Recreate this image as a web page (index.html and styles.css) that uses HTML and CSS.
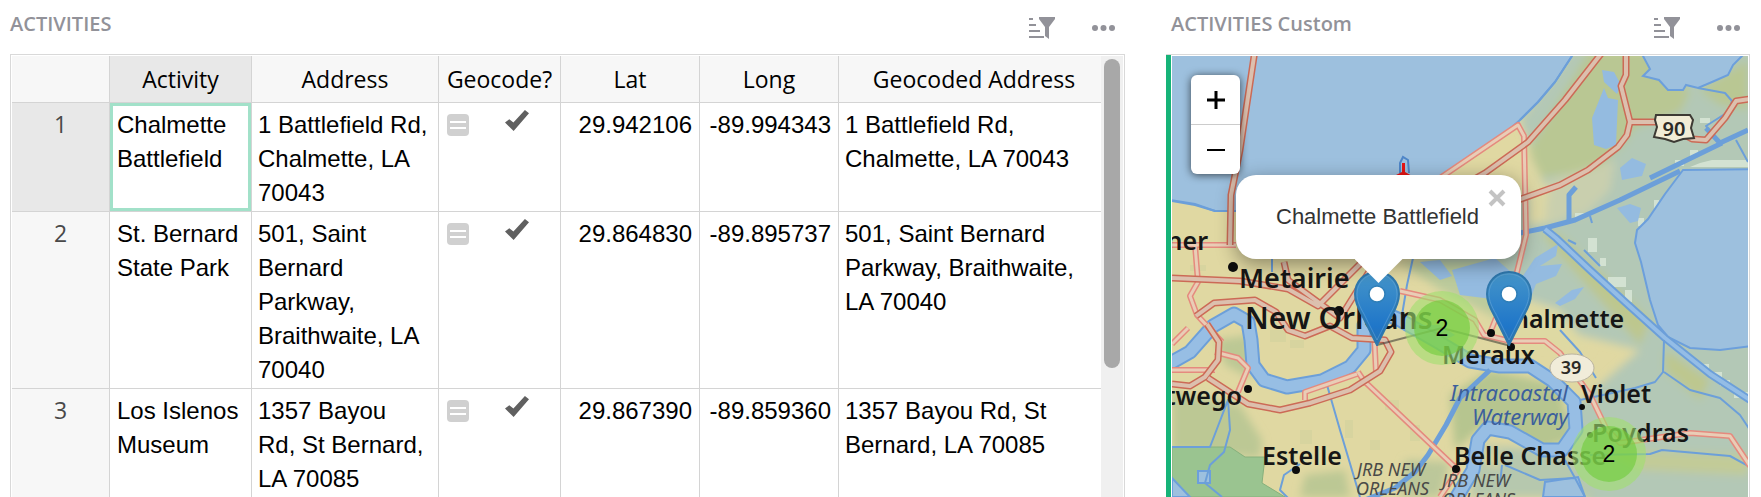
FILE: index.html
```html
<!DOCTYPE html>
<html lang="en">
<head>
<meta charset="utf-8">
<title>Activities</title>
<link rel="stylesheet" href="styles.css">
</head>
<body>
<svg class="defs" aria-hidden="true">
  <symbol id="icon-sort" viewBox="0 0 26 22">
    <path d="M0 2h4M0 8h7M0 14h11M0 20h15" stroke="currentColor" stroke-width="2" fill="none"/>
    <path d="M10 0h16v2l-6 8v12l-4-3v-9l-6-8z" fill="currentColor"/>
  </symbol>
  <symbol id="icon-dots" viewBox="0 0 23 22">
    <circle cx="3" cy="11" r="3" fill="currentColor"/><circle cx="11.500" cy="11" r="3" fill="currentColor"/><circle cx="20" cy="11" r="3" fill="currentColor"/>
  </symbol>
  <symbol id="icon-pin" viewBox="0 0 46 75">
    <path d="M23 1C10 1 1 11 1 23c0 8 3 14 7 21l15 30 15-30c4-7 7-13 7-21C45 11 36 1 23 1z" fill="url(#pin-fill)" stroke="#2f78ad" stroke-width="2"/>
    <path d="M23 3C11 3 3 12 3 23c0 7 3 13 7 20l13 26 13-26c4-7 7-13 7-20C43 12 35 3 23 3z" fill="none" stroke="#6fabd6" stroke-opacity=".5" stroke-width="1"/>
    <circle cx="23" cy="23" r="8" fill="#fff" stroke="#2f7fb8" stroke-width="1.500"/>
  </symbol>
  <linearGradient id="pin-fill" x1="0" y1="0" x2="0" y2="1">
    <stop offset="0" stop-color="#4595c9"/><stop offset=".75" stop-color="#1f76c9"/><stop offset="1" stop-color="#2a72b0"/>
  </linearGradient>
</svg>
<main class="page">
  <section class="panel panel-grid">
    <header class="panel-head">
      <h2>ACTIVITIES</h2>
      <button class="tool" aria-label="Sort and filter"><svg class="i-sort"><use href="#icon-sort"/></svg></button>
      <button class="tool" aria-label="More"><svg class="i-dots"><use href="#icon-dots"/></svg></button>
    </header>
    <div class="grid-frame">
      <table class="grid">
        <colgroup><col class="c-num"><col class="c-act"><col class="c-addr"><col class="c-geo"><col class="c-deg"><col class="c-deg"><col></colgroup>
        <thead>
          <tr><th></th><th class="current">Activity</th><th>Address</th><th>Geocode?</th><th>Lat</th><th>Long</th><th>Geocoded Address</th></tr>
        </thead>
        <tbody>
          <tr>
            <th class="current">1</th><td class="name selected">Chalmette Battlefield</td><td>1 Battlefield Rd, Chalmette, LA 70043</td>
            <td><div class="toggle"><span class="formula"></span><input type="checkbox" checked aria-label="Geocode row 1"></div></td>
            <td class="num">29.942106</td><td class="num">-89.994343</td><td>1 Battlefield Rd, Chalmette, LA 70043</td>
          </tr>
          <tr>
            <th>2</th><td class="name">St. Bernard State Park</td><td>501, Saint Bernard Parkway, Braithwaite, LA 70040</td>
            <td><div class="toggle"><span class="formula"></span><input type="checkbox" checked aria-label="Geocode row 2"></div></td>
            <td class="num">29.864830</td><td class="num">-89.895737</td><td>501, Saint Bernard Parkway, Braithwaite, LA 70040</td>
          </tr>
          <tr>
            <th>3</th><td class="name">Los Islenos Museum</td><td>1357 Bayou Rd, St Bernard, LA 70085</td>
            <td><div class="toggle"><span class="formula"></span><input type="checkbox" checked aria-label="Geocode row 3"></div></td>
            <td class="num">29.867390</td><td class="num">-89.859360</td><td>1357 Bayou Rd, St Bernard, LA 70085</td>
          </tr>
        </tbody>
      </table>
      <div class="scrollbar"><div class="thumb"></div></div>
    </div>
  </section>

  <section class="panel panel-map">
    <header class="panel-head">
      <h2>ACTIVITIES Custom</h2>
      <button class="tool" aria-label="Sort and filter"><svg class="i-sort"><use href="#icon-sort"/></svg></button>
      <button class="tool" aria-label="More"><svg class="i-dots"><use href="#icon-dots"/></svg></button>
    </header>
    <div class="map-frame">
      <div class="map">
        <svg class="tiles" viewBox="1172 56 576 441" preserveAspectRatio="xMinYMin slice" role="img" aria-label="Map of New Orleans">
          <defs>
            <filter id="soft" x="-20%" y="-20%" width="140%" height="140%"><feGaussianBlur stdDeviation="4"/></filter>
          </defs>
          <rect x="1172" y="56" width="576" height="441" fill="#e0d8a2"/>
          <!-- marsh and parkland -->
          <g filter="url(#soft)">
            <path d="M1572 50H1760V510H1590L1560 420 1640 350 1560 330 1420 260 1500 225 1540 175 1520 120z" fill="#b3c8b6"/>
            <path d="M1590 50H1645L1690 92 1680 112 1634 128 1625 142 1595 170 1535 178 1530 148z" fill="#b9c793"/>
            <path d="M1700 90 1748 60V110L1720 105z" fill="#b9c793"/>
            <path d="M1528 150 1545 185 1610 165 1600 200 1560 220 1528 225z" fill="#dcd7a4"/>
            <path d="M1550 180 1615 160 1610 190 1585 215 1545 220z" fill="#c9cfae"/>
            <path d="M1540 232 1560 235 1650 320 1640 345z" fill="#bdc78e"/>
            <path d="M1500 290 1560 310 1590 350 1530 345 1480 330z" fill="#ded9a3"/>
            <path d="M1665 350 1710 380 1700 400 1665 370z" fill="#bdc78e"/>
            <path d="M1450 395 1490 370 1560 385 1570 440 1540 450 1490 420 1455 450z" fill="#b6c58f"/>
            <path d="M1600 450 1748 455V475L1640 470z" fill="#c2cb97"/>
            <path d="M1480 445 1560 450 1600 497H1470z" fill="#b6c8ae"/>
            <path d="M1172 392 1240 405 1262 440 1260 458 1172 450z" fill="#bcc894"/>
            <path d="M1215 340 1250 335 1250 378 1225 365z" fill="#bcc894"/>
            <path d="M1305 475 1345 470 1350 497H1300z" fill="#bcc894"/>
            <path d="M1405 460 1450 462 1440 497H1400z" fill="#bcc79a"/>
            <path d="M1400 262 1500 262 1500 320 1440 290z" fill="#bccb9c"/>
            <path d="M1470 455 1500 450 1500 470z" fill="#d8d49f"/>
          </g>
          <g class="speck">
            <path d="M1300 430h12v14h-12zM1345 420h8v18h-8zM1385 400h14v10h-14zM1410 425h10v16h-10zM1290 340h14v8h-14zM1370 440h10v10h-10zM1190 265h16v6h-16zM1270 330h16v12h-16z"/>
          </g>
          <g class="sparkle">
            <path d="M1700 118h10v5h-10zM1690 150h8v6h-8zM1675 160h9v6h-9zM1588 238h9v14h-9zM1600 258h6v8h-6zM1608 277h18v10h-18zM1625 290h7v12h-7zM1654 200h5v10h-5zM1638 218h6v8h-6zM1575 213h10v5h-10zM1720 380h10v6h-10zM1734 392h14v6h-14zM1700 364h9v5h-9zM1714 372h8v5h-8z"/>
            <path d="M1700 163 1712 160 1748 160V167H1690z"/>
          </g>
          <path class="park" d="M1172 447H1230L1245 457H1265L1262 483 1285 497H1172z"/>
          <!-- lakes -->
          <g class="water">
            <path d="M1170 50H1576L1572 56 1555 82 1538 102 1520 120 1495 142 1460 166 1400 198 1300 215 1237 211H1215L1195 204 1170 200z"/>
            <path d="M1643 50V56L1650 69 1643 76 1659 80 1668 90 1683 90 1686 85 1698 88 1712 82 1728 75 1733 65 1744 54z"/>
            <path d="M1683 170 1665 194 1648 219 1637 230 1635 243 1641 262 1650 300 1658 325 1668 337 1690 348 1720 350 1760 345V169z"/>
            <path d="M1172 478 1190 497H1172zM1198 471h12v12h-12zM1545 482 1578 477 1585 497H1543z"/>
          </g>
          <g class="pond">
            <path d="M1604 88 1608 98 1618 100 1616 145 1606 149 1594 145 1592 118z"/>
            <path d="M1602 70 1614 72 1621 85 1617 94 1604 82z"/>
            <path d="M1620 168 1632 158 1646 164 1642 176 1622 180z"/>
            <path d="M1617 208 1630 204 1641 208 1638 221 1630 223z"/>
            <path d="M1420 262 1440 260 1452 276 1440 280z"/>
            <path d="M1452 270 1495 258 1520 280 1535 258 1558 244 1556 256 1540 266 1562 264 1556 276 1536 284 1530 300 1500 300 1460 295z"/>
            <path d="M1555 303 1572 290 1584 287 1575 299 1560 306z"/>
            <path d="M1420 325 1445 340 1455 335 1440 325z"/>
          </g>
          <!-- Mississippi river -->
          <g class="river-edge"><path id="river" d="M1165 366 1190 352 1213 326 1234 314 1248 322 1251 340 1253 365 1264 380 1287 387 1322 381 1350 367 1364 350 1364 325 1372 308 1400 320 1440 343 1470 361 1500 366 1530 366 1553 381 1574 402 1576 430 1562 450 1542 450 1510 432 1488 428 1478 440 1473 470 1455 500"/></g>
          <g class="river"><use href="#river"/></g>
          <!-- canals -->
          <g class="canal wide">
            <path d="M1490 370 1460 398 1446 425 1428 455 1415 472 1395 488 1365 500"/>
            <path d="M1520 233 1545 228 1575 220 1620 200 1680 171"/>
            <path d="M1569 222V195L1576 187"/>
            <path d="M1706 128 1720 143 1748 130M1650 178 1722 143"/>
          </g>
          <g class="canal-double"><path id="gulf" d="M1545 229 1556 238 1590 270 1625 302 1665 338 1710 374 1750 400"/></g>
          <g class="canal-core"><use href="#gulf"/></g>
          <g class="canal">
            <path d="M1572 56 1555 82 1538 102 1520 120M1698 88 1725 93 1732 101 1728 112 1706 126 1712 134M1736 140 1748 162"/>
            <path d="M1172 201 1195 205 1215 211 1237 211"/>
            <path d="M1327 385 1340 430 1360 497M1172 447H1210L1228 400 1230 430 1224 452 1210 465 1205 483 1222 497M1300 464 1284 475 1280 490 1290 500"/>
            <path d="M1272 258V272M1413 258 1407 285 1402 315M1664 340 1663 372 1655 382 1635 388 1580 400M1664 372 1690 390 1720 398 1740 415 1750 430M1560 330 1580 352 1596 378"/>
            <path d="M1590 455 1650 454 1662 450 1730 456 1750 467M1505 465 1540 480 1575 478 1565 460M1502 465 1500 485M1585 497 1575 478"/>
            <path d="M1568 240 1576 244M1584 250 1600 266M1590 216 1592 223"/>
          </g>
          <!-- roads -->
          <g class="road-edge minor">
            <path id="m1" d="M1172 245H1236M1195 245 1198 282 1190 296 1197 315 1222 342M1172 370H1215M1215 352 1238 358 1248 368 1238 392M1172 344 1188 328M1305 400V392L1357 374M1374 330 1376 372M1358 372 1366 384M1363 380 1400 415 1458 470 1440 497M1400 291 1440 300 1475 320 1484 335 1510 341 1545 341 1560 353 1590 395 1606 428 1620 443 1690 433 1730 436 1750 466M1490 333 1496 318"/>
            <path id="m2" d="M1440 178 1518 125 1524 136 1526 235 1517 272 1510 300"/>
          </g>
          <g class="road-core minor"><use href="#m1"/><use href="#m2"/></g>
          <g class="road-edge">
            <path id="r1" d="M1255 50 1249 90 1240 150 1231 195 1230 245"/>
            <path id="r2" d="M1604 50 1565 100 1528 142 1485 173 1420 210"/>
            <path id="r3" d="M1626 50V75L1621 86 1630 122 1627 135 1618 147 1588 170 1560 185 1510 203"/>
            <path id="r4" d="M1630 122H1660L1692 139 1706 140 1725 118 1736 101 1750 99"/>
            <path id="r5" d="M1172 278 1240 281 1288 289 1318 306 1362 262M1284 262 1288 280 1340 318 1370 270"/>
            <path id="r6" d="M1196 316 1214 303 1255 300 1276 312 1288 330 1305 336 1330 326 1352 338 1385 340 1391 352 1380 371 1350 390 1310 403 1280 410 1248 404 1208 378M1207 324 1219 342 1218 360 1205 377 1190 386 1172 384"/>
          </g>
          <g class="road-core"><use href="#r1"/><use href="#r2"/><use href="#r3"/><use href="#r4"/><use href="#r5"/><use href="#r6"/></g>
          <path d="M1400 173V163l3-6 5 3 1 13" fill="none" stroke="#4f86c8" stroke-width="2"/>
          <path d="M1392 177 1402 172V163h3v9l9 5z" fill="#e81414"/>
          <!-- route shields -->
          <path d="M1656 115h34l3 5-2 8 3 10-11 1-9 3-9-3-11-2 3-10-2-7z" fill="#f1ecd6" stroke="#3d3a34" stroke-width="2"/>
          <text class="shield" x="1674" y="136">90</text>
          <ellipse cx="1572" cy="368" rx="22" ry="14" fill="#f1ecd9" stroke="#b9b3a0"/>
          <text class="shield small" x="1571" y="374">39</text>
          <!-- places -->
          <g class="dots">
            <circle cx="1233" cy="267" r="5"/><circle cx="1339" cy="311" r="5"/><circle cx="1248" cy="389" r="4"/><circle cx="1296" cy="470" r="4"/><circle cx="1456" cy="469" r="4"/><circle cx="1491" cy="333" r="4"/><circle cx="1511" cy="347" r="4"/><circle cx="1582" cy="407" r="3"/><circle cx="1590" cy="435" r="3"/>
          </g>
          <g class="place">
            <text class="end" x="1208" y="250">Kenner</text>
            <text class="town" x="1239" y="288">Metairie</text>
            <text class="city" x="1245" y="329">New Orleans</text>
            <text x="1497" y="328">Chalmette</text>
            <text x="1442" y="364">Meraux</text>
            <text class="end" x="1242" y="405">Westwego</text>
            <text x="1262" y="465">Estelle</text>
            <text x="1454" y="465">Belle Chasse</text>
            <text x="1581" y="403">Violet</text>
            <text x="1592" y="442">Poydras</text>
          </g>
          <g class="waterway"><text x="1450" y="401">Intracoastal</text><text x="1472" y="425">Waterway</text></g>
          <g class="base">
            <text x="1357" y="476">JRB NEW</text><text x="1356" y="495">ORLEANS</text>
            <text x="1442" y="487">JRB NEW</text><text x="1442" y="506">ORLEANS</text>
          </g>
          <path d="M1377 345 1442 328 1511 346" fill="none" stroke="#222" stroke-opacity=".5" stroke-width="2"/>
        </svg>

        <svg class="pin pin-a" aria-label="Chalmette Battlefield marker"><use href="#icon-pin"/></svg>
        <svg class="pin pin-b" aria-label="Marker"><use href="#icon-pin"/></svg>
        <div class="cluster cluster-a"><span>2</span></div>
        <div class="cluster cluster-b"><span>2</span></div>
        <div class="popup">
          <p>Chalmette Battlefield</p>
          <button class="close" aria-label="Close popup"><svg viewBox="0 0 18 18"><path d="M2 2l14 14M16 2L2 16" stroke="#c3c3c3" stroke-width="4"/></svg></button>
        </div>
        <div class="zoom">
          <button aria-label="Zoom in"><svg viewBox="0 0 18 18"><path d="M0 9h18M9 0v18" stroke="#000" stroke-width="3"/></svg></button>
          <button aria-label="Zoom out"><svg viewBox="0 0 18 18"><path d="M0 9h18" stroke="#000" stroke-width="2"/></svg></button>
        </div>
      </div>
    </div>
  </section>
</main>
</body>
</html>
```
FILE: styles.css
```css
* { box-sizing: border-box; }
body { margin: 0; background: #fff; color: #000; font-family: "Liberation Sans", Arial, sans-serif; }
button { padding: 0; border: 0; background: none; color: inherit; display: flex; align-items: center; justify-content: center; }
.defs { position: absolute; width: 0; height: 0; }

.page { display: flex; gap: 41px; height: 100vh; padding: 0 11px 0 10px; overflow: hidden; }
.panel { display: flex; flex-direction: column; min-width: 0; }
.panel-grid { flex: 1115 1 0; }
.panel-map { flex: 584 1 0; }

.panel-head { display: flex; align-items: center; flex: none; height: 54px; padding: 2px 10px 0 0; color: #929299; }
.panel-map .panel-head { padding-left: 5px; }
.panel-head h2 { flex: 1; margin: 0; padding-bottom: 8px; font: 600 20px/28px "Open Sans", "Noto Sans", sans-serif; }
.tool + .tool { margin-left: 37px; }
.tool svg { display: block; height: 22px; }
.i-sort { width: 26px; }
.i-dots { width: 23px; }

.grid-frame { display: flex; flex: 1; min-height: 0; padding: 1px 1px 0; border: 1px solid #d9d9d9; border-bottom: 0; overflow: hidden; }
.grid { flex: 1; min-width: 0; align-self: flex-start; table-layout: fixed; border-collapse: separate; border-spacing: 0; font-size: 24px; line-height: 34px; }
.c-num { width: 98px; }
.c-act { width: 142px; }
.c-addr { width: 187px; }
.c-geo { width: 122px; }
.c-deg { width: 139px; }
.grid th, .grid td { border: solid #d4d4d4; border-width: 0 1px 1px 0; vertical-align: top; }
.grid th:last-child, .grid td:last-child { border-right: 0; }
.grid th { padding: 0; background: #f7f7f7; font: 400 23px/46px "Open Sans", "Noto Sans", sans-serif; }
.grid thead th:last-child { padding-left: 8px; }
.grid tbody th { padding-top: 4px; color: #494949; line-height: 34px; }
.grid th.current { background: #e8e8e8; }
.grid td { padding: 5px 8px 1px 6px; text-align: left; }
.grid td.name { padding-left: 7px; padding-right: 7px; }
.grid td.num { padding-right: 7px; text-align: right; }
.grid td.selected { box-shadow: inset 0 0 0 3px #a2e1c9; }
.toggle { display: flex; align-items: flex-start; gap: 36px; padding: 2px 0 0 2px; }
.formula { display: flex; flex-direction: column; justify-content: center; gap: 4px; width: 22px; height: 22px; margin-top: 4px; padding: 0 3px; border-radius: 4px; background: #d0d0d0; }
.formula::before, .formula::after { content: ""; height: 2px; background: #fff; }
.toggle input { appearance: none; width: 24px; height: 21px; margin: 0; background: #606060; clip-path: polygon(0 60%, 18% 44%, 35% 60%, 83% 0, 100% 16%, 36% 100%); }

.scrollbar { flex: none; width: 22px; padding: 3px; background: #f0f0f0; }
.thumb { width: 16px; height: 309px; border-radius: 8px; background: #a8a8a8; }

.map-frame { flex: 1; min-height: 0; padding: 1px 1px 0 6px; border: solid #d9d9d9; border-width: 1px 1px 0 0; box-shadow: inset 5px 0 #16b378; }
.map { position: relative; height: 100%; overflow: hidden; }
.tiles { display: block; width: 100%; height: 100%; }
.water { fill: #9dc0de; stroke: #6c9fdc; stroke-width: 2; }
.pond { fill: #94bbe0; }
.park { fill: #9ac490; stroke: #86b07c; }
.speck { fill: #cdd09b; opacity: .5; }
.sparkle { fill: #d3e2d2; }
.river-edge, .river, .canal, .canal-double, .canal-core, .road-edge, .road-core { fill: none; stroke-linejoin: round; }
.river-edge { stroke: #6c9fd9; stroke-width: 15; }
.river { stroke: #97bee4; stroke-width: 11; }
.canal { stroke: #6c9fd9; stroke-width: 2; }
.canal.wide { stroke-width: 5; }
.canal-double { stroke: #6c9fd9; stroke-width: 8; }
.canal-core { stroke: #94bde6; stroke-width: 4; }
.road-edge { stroke: #cc6a56; stroke-width: 7; }
.road-core { stroke: #dcc0ae; stroke-width: 4; }
.road-edge.minor { stroke: #e58a7e; stroke-width: 6; }
.road-core.minor { stroke: #e9cdb6; stroke-width: 3; }
.dots { fill: #0c0c0c; }
.place { fill: #161616; font: 600 25px "Noto Sans", "Open Sans", sans-serif; }
.place .town { font-size: 27px; }
.place .city { font-size: 30px; }
.end { text-anchor: end; }
.waterway { fill: #3c5f9c; font: italic 400 22px "Noto Sans", sans-serif; }
.base { fill: #4a4a48; font: italic 400 18px "Noto Sans", sans-serif; }
.shield { fill: #2c2a26; font: 600 20px "Noto Sans", sans-serif; text-anchor: middle; }
.shield.small { font-size: 18px; }

.pin { position: absolute; width: 46px; height: 75px; }
.pin-a { left: 182px; top: 215px; }
.pin-b { left: 314px; top: 215px; }
.cluster { position: absolute; display: flex; padding: 9px; width: 74px; height: 74px; border-radius: 50%; background: rgba(160, 224, 110, .6); font-size: 23px; }
.cluster span { flex: 1; border-radius: 50%; background: rgba(110, 204, 57, .6); line-height: 56px; text-align: center; }
.cluster-a { left: 233px; top: 235px; }
.cluster-b { left: 400px; top: 361px; }
.popup { position: absolute; left: 64px; top: 119px; padding: 25px 42px 25px 40px; border-radius: 20px; background: #fff; box-shadow: 0 5px 20px rgba(0, 0, 0, .4); color: #333; font-size: 22px; line-height: 34px; white-space: nowrap; }
.popup::after { content: ""; position: absolute; left: 50%; top: 100%; width: 48px; height: 24px; margin-left: -24px; background: #fff; clip-path: polygon(0 0, 100% 0, 50% 100%); }
.popup p { margin: 0; }
.close { position: absolute; top: 14px; right: 15px; }
.close svg { display: block; width: 18px; height: 18px; }
.zoom { position: absolute; left: 19px; top: 19px; width: 49px; border-radius: 6px; background: #fff; box-shadow: 0 1px 8px rgba(0, 0, 0, .65); }
.zoom button { width: 100%; height: 49px; }
.zoom button + button { height: 50px; border-top: 1px solid #ccc; }
.zoom svg { width: 18px; height: 18px; }
```
